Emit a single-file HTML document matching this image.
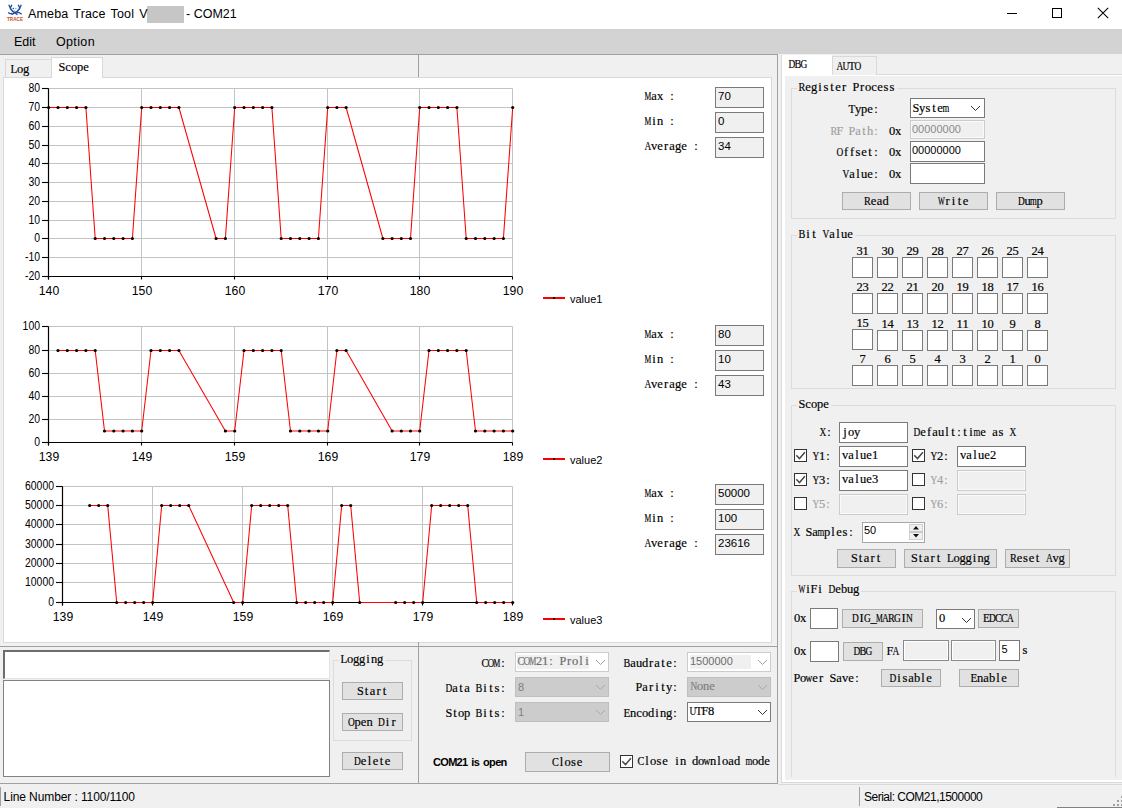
<!DOCTYPE html>
<html><head><meta charset="utf-8"><style>
html,body{margin:0;padding:0;}
body{width:1122px;height:808px;position:relative;overflow:hidden;background:#f0f0f0;}
div{position:absolute;}
svg{position:absolute;left:0;top:0;}
.sim{font-family:"Liberation Serif",serif;font-size:12.5px;stroke:currentColor;stroke-width:0.18px;}
.sans{font-family:"Liberation Sans",sans-serif;}
</style></head><body>
<div style="left:0px;top:0px;width:1122px;height:29px;background:#fff;"></div>
<div style="left:147px;top:6px;width:37px;height:17px;background:#c6c6c6;"></div>
<div style="left:1007px;top:13px;width:10px;height:1px;background:#000;"></div>
<div style="left:1052px;top:8px;width:10px;height:10px;box-sizing:border-box;background:transparent;border:1px solid #000;"></div>
<div style="left:0px;top:29px;width:1122px;height:25px;background:#d3d3d3;"></div>
<div style="left:0px;top:54px;width:778px;height:1px;background:#a0a0a0;"></div>
<div style="left:777px;top:54px;width:1px;height:730px;background:#a0a0a0;"></div>
<div style="left:0px;top:783px;width:778px;height:1px;background:#a0a0a0;"></div>
<div style="left:418px;top:55px;width:1px;height:22px;background:#a0a0a0;"></div>
<div style="left:5px;top:59px;width:47px;height:19px;box-sizing:border-box;background:#f0f0f0;border:1px solid #d9d9d9;border-bottom:none;"></div>
<div style="left:3px;top:77px;width:769px;height:566px;box-sizing:border-box;background:#fff;border:1px solid #d9d9d9;"></div>
<div style="left:51px;top:57px;width:52px;height:21px;box-sizing:border-box;background:#fff;border:1px solid #d9d9d9;border-bottom:none;"></div>
<div style="left:715px;top:87px;width:49px;height:21px;box-sizing:border-box;background:#f0f0f0;border:1px solid #7a7a7a;"></div>
<div style="left:715px;top:112px;width:49px;height:21px;box-sizing:border-box;background:#f0f0f0;border:1px solid #7a7a7a;"></div>
<div style="left:715px;top:137px;width:49px;height:21px;box-sizing:border-box;background:#f0f0f0;border:1px solid #7a7a7a;"></div>
<div style="left:715px;top:325px;width:49px;height:21px;box-sizing:border-box;background:#f0f0f0;border:1px solid #7a7a7a;"></div>
<div style="left:715px;top:350px;width:49px;height:21px;box-sizing:border-box;background:#f0f0f0;border:1px solid #7a7a7a;"></div>
<div style="left:715px;top:375px;width:49px;height:21px;box-sizing:border-box;background:#f0f0f0;border:1px solid #7a7a7a;"></div>
<div style="left:715px;top:484px;width:49px;height:21px;box-sizing:border-box;background:#f0f0f0;border:1px solid #7a7a7a;"></div>
<div style="left:715px;top:509px;width:49px;height:21px;box-sizing:border-box;background:#f0f0f0;border:1px solid #7a7a7a;"></div>
<div style="left:715px;top:534px;width:49px;height:21px;box-sizing:border-box;background:#f0f0f0;border:1px solid #7a7a7a;"></div>
<div style="left:543px;top:297px;width:22px;height:2px;background:#ff0000;"></div>
<div style="left:553px;top:297px;width:2px;height:2px;background:#000;"></div>
<div style="left:543px;top:458px;width:22px;height:2px;background:#ff0000;"></div>
<div style="left:553px;top:458px;width:2px;height:2px;background:#000;"></div>
<div style="left:543px;top:618px;width:22px;height:2px;background:#ff0000;"></div>
<div style="left:553px;top:618px;width:2px;height:2px;background:#000;"></div>
<div style="left:0px;top:646px;width:778px;height:1px;background:#a0a0a0;"></div>
<div style="left:3px;top:650px;width:327px;height:29px;box-sizing:border-box;background:#fff;border-top:2px solid #6d6d6d;border-left:2px solid #6d6d6d;border-right:1px solid #e3e3e3;border-bottom:1px solid #e3e3e3;"></div>
<div style="left:3px;top:680px;width:327px;height:97px;box-sizing:border-box;background:#fff;border:1px solid #828282;"></div>
<div style="left:333px;top:660px;width:79px;height:81px;box-sizing:border-box;background:transparent;border:1px solid #dcdcdc;"></div>
<div style="left:339px;top:654px;width:46px;height:12px;background:#f0f0f0;"></div>
<div style="left:342px;top:682px;width:61px;height:18px;box-sizing:border-box;background:#e1e1e1;border:1px solid #adadad;"></div>
<div style="left:342px;top:713px;width:61px;height:18px;box-sizing:border-box;background:#e1e1e1;border:1px solid #adadad;"></div>
<div style="left:342px;top:752px;width:61px;height:18px;box-sizing:border-box;background:#e1e1e1;border:1px solid #adadad;"></div>
<div style="left:418px;top:642px;width:1px;height:141px;background:#a0a0a0;"></div>
<div style="left:515px;top:652px;width:94px;height:20px;box-sizing:border-box;background:#fff;border:1px solid #cccccc;"></div>
<div style="left:517px;top:655px;width:72px;height:14px;background:#f0f0f0;"></div>
<div style="left:515px;top:677px;width:94px;height:20px;box-sizing:border-box;background:#cccccc;border:1px solid #bfbfbf;"></div>
<div style="left:515px;top:702px;width:94px;height:20px;box-sizing:border-box;background:#cccccc;border:1px solid #bfbfbf;"></div>
<div style="left:687px;top:652px;width:84px;height:20px;box-sizing:border-box;background:#fff;border:1px solid #cccccc;"></div>
<div style="left:690px;top:655px;width:61px;height:14px;background:#f0f0f0;"></div>
<div style="left:687px;top:677px;width:84px;height:20px;box-sizing:border-box;background:#cccccc;border:1px solid #bfbfbf;"></div>
<div style="left:687px;top:702px;width:84px;height:20px;box-sizing:border-box;background:#fff;border:1px solid #7a7a7a;"></div>
<div style="left:525px;top:752px;width:85px;height:20px;box-sizing:border-box;background:#e1e1e1;border:1px solid #adadad;"></div>
<div style="left:620px;top:755px;width:13px;height:13px;box-sizing:border-box;background:#fff;border:1px solid #333333;"></div>
<div style="left:781px;top:55px;width:341px;height:728px;background:#fff;"></div>
<div style="left:781px;top:55px;width:1px;height:728px;background:#d9d9d9;"></div>
<div style="left:781px;top:782px;width:341px;height:1px;background:#d9d9d9;"></div>
<div style="left:782px;top:55px;width:340px;height:19px;background:#f0f0f0;"></div>
<div style="left:832px;top:74px;width:290px;height:1px;background:#d9d9d9;"></div>
<div style="left:782px;top:55px;width:50px;height:20px;background:#fff;"></div>
<div style="left:832px;top:56px;width:45px;height:19px;box-sizing:border-box;background:#f0f0f0;border:1px solid #d9d9d9;border-bottom:none;"></div>
<div style="left:785px;top:76px;width:337px;height:704px;background:#f0f0f0;"></div>
<div style="left:791px;top:88px;width:325px;height:131px;box-sizing:border-box;background:transparent;border:1px solid #dcdcdc;"></div>
<div style="left:797px;top:82px;width:100px;height:12px;background:#f0f0f0;"></div>
<div style="left:910px;top:98px;width:75px;height:20px;box-sizing:border-box;background:#fff;border:1px solid #7a7a7a;"></div>
<div style="left:910px;top:120px;width:75px;height:19px;box-sizing:border-box;background:#f0f0f0;border:1px solid #cccccc;"></div>
<div style="left:911px;top:121px;width:73px;height:17px;box-sizing:border-box;border:1px solid #fafafa;"></div>
<div style="left:910px;top:141px;width:75px;height:21px;box-sizing:border-box;background:#fff;border:1px solid #7a7a7a;"></div>
<div style="left:910px;top:163px;width:75px;height:21px;box-sizing:border-box;background:#fff;border:1px solid #7a7a7a;"></div>
<div style="left:842px;top:192px;width:69px;height:18px;box-sizing:border-box;background:#e1e1e1;border:1px solid #adadad;"></div>
<div style="left:919px;top:192px;width:69px;height:18px;box-sizing:border-box;background:#e1e1e1;border:1px solid #adadad;"></div>
<div style="left:996px;top:192px;width:69px;height:18px;box-sizing:border-box;background:#e1e1e1;border:1px solid #adadad;"></div>
<div style="left:791px;top:235px;width:325px;height:154px;box-sizing:border-box;background:transparent;border:1px solid #dcdcdc;"></div>
<div style="left:797px;top:229px;width:58px;height:12px;background:#f0f0f0;"></div>
<div style="left:852px;top:257px;width:21px;height:21px;box-sizing:border-box;background:#fff;border:1px solid #7a7a7a;"></div>
<div style="left:877px;top:257px;width:21px;height:21px;box-sizing:border-box;background:#fff;border:1px solid #7a7a7a;"></div>
<div style="left:902px;top:257px;width:21px;height:21px;box-sizing:border-box;background:#fff;border:1px solid #7a7a7a;"></div>
<div style="left:927px;top:257px;width:21px;height:21px;box-sizing:border-box;background:#fff;border:1px solid #7a7a7a;"></div>
<div style="left:952px;top:257px;width:21px;height:21px;box-sizing:border-box;background:#fff;border:1px solid #7a7a7a;"></div>
<div style="left:977px;top:257px;width:21px;height:21px;box-sizing:border-box;background:#fff;border:1px solid #7a7a7a;"></div>
<div style="left:1002px;top:257px;width:21px;height:21px;box-sizing:border-box;background:#fff;border:1px solid #7a7a7a;"></div>
<div style="left:1027px;top:257px;width:21px;height:21px;box-sizing:border-box;background:#fff;border:1px solid #7a7a7a;"></div>
<div style="left:852px;top:293px;width:21px;height:21px;box-sizing:border-box;background:#fff;border:1px solid #7a7a7a;"></div>
<div style="left:877px;top:293px;width:21px;height:21px;box-sizing:border-box;background:#fff;border:1px solid #7a7a7a;"></div>
<div style="left:902px;top:293px;width:21px;height:21px;box-sizing:border-box;background:#fff;border:1px solid #7a7a7a;"></div>
<div style="left:927px;top:293px;width:21px;height:21px;box-sizing:border-box;background:#fff;border:1px solid #7a7a7a;"></div>
<div style="left:952px;top:293px;width:21px;height:21px;box-sizing:border-box;background:#fff;border:1px solid #7a7a7a;"></div>
<div style="left:977px;top:293px;width:21px;height:21px;box-sizing:border-box;background:#fff;border:1px solid #7a7a7a;"></div>
<div style="left:1002px;top:293px;width:21px;height:21px;box-sizing:border-box;background:#fff;border:1px solid #7a7a7a;"></div>
<div style="left:1027px;top:293px;width:21px;height:21px;box-sizing:border-box;background:#fff;border:1px solid #7a7a7a;"></div>
<div style="left:852px;top:329px;width:21px;height:21px;box-sizing:border-box;background:#fff;border:1px solid #7a7a7a;"></div>
<div style="left:877px;top:330px;width:21px;height:21px;box-sizing:border-box;background:#fff;border:1px solid #7a7a7a;"></div>
<div style="left:902px;top:330px;width:21px;height:21px;box-sizing:border-box;background:#fff;border:1px solid #7a7a7a;"></div>
<div style="left:927px;top:330px;width:21px;height:21px;box-sizing:border-box;background:#fff;border:1px solid #7a7a7a;"></div>
<div style="left:952px;top:330px;width:21px;height:21px;box-sizing:border-box;background:#fff;border:1px solid #7a7a7a;"></div>
<div style="left:977px;top:330px;width:21px;height:21px;box-sizing:border-box;background:#fff;border:1px solid #7a7a7a;"></div>
<div style="left:1002px;top:330px;width:21px;height:21px;box-sizing:border-box;background:#fff;border:1px solid #7a7a7a;"></div>
<div style="left:1027px;top:330px;width:21px;height:21px;box-sizing:border-box;background:#fff;border:1px solid #7a7a7a;"></div>
<div style="left:852px;top:365px;width:21px;height:21px;box-sizing:border-box;background:#fff;border:1px solid #7a7a7a;"></div>
<div style="left:877px;top:365px;width:21px;height:21px;box-sizing:border-box;background:#fff;border:1px solid #7a7a7a;"></div>
<div style="left:902px;top:365px;width:21px;height:21px;box-sizing:border-box;background:#fff;border:1px solid #7a7a7a;"></div>
<div style="left:927px;top:365px;width:21px;height:21px;box-sizing:border-box;background:#fff;border:1px solid #7a7a7a;"></div>
<div style="left:952px;top:365px;width:21px;height:21px;box-sizing:border-box;background:#fff;border:1px solid #7a7a7a;"></div>
<div style="left:977px;top:365px;width:21px;height:21px;box-sizing:border-box;background:#fff;border:1px solid #7a7a7a;"></div>
<div style="left:1002px;top:365px;width:21px;height:21px;box-sizing:border-box;background:#fff;border:1px solid #7a7a7a;"></div>
<div style="left:1027px;top:365px;width:21px;height:21px;box-sizing:border-box;background:#fff;border:1px solid #7a7a7a;"></div>
<div style="left:791px;top:405px;width:325px;height:171px;box-sizing:border-box;background:transparent;border:1px solid #dcdcdc;"></div>
<div style="left:797px;top:399px;width:34px;height:12px;background:#f0f0f0;"></div>
<div style="left:839px;top:422px;width:69px;height:21px;box-sizing:border-box;background:#fff;border:1px solid #7a7a7a;"></div>
<div style="left:794px;top:449px;width:13px;height:13px;box-sizing:border-box;background:#fff;border:1px solid #333333;"></div>
<div style="left:839px;top:446px;width:69px;height:21px;box-sizing:border-box;background:#fff;border:1px solid #7a7a7a;"></div>
<div style="left:912px;top:449px;width:13px;height:13px;box-sizing:border-box;background:#fff;border:1px solid #333333;"></div>
<div style="left:957px;top:446px;width:69px;height:21px;box-sizing:border-box;background:#fff;border:1px solid #7a7a7a;"></div>
<div style="left:794px;top:473px;width:13px;height:13px;box-sizing:border-box;background:#fff;border:1px solid #333333;"></div>
<div style="left:839px;top:470px;width:69px;height:21px;box-sizing:border-box;background:#fff;border:1px solid #7a7a7a;"></div>
<div style="left:912px;top:473px;width:13px;height:13px;box-sizing:border-box;background:#fff;border:1px solid #333333;"></div>
<div style="left:957px;top:470px;width:69px;height:21px;box-sizing:border-box;background:#f0f0f0;border:1px solid #cccccc;"></div>
<div style="left:958px;top:471px;width:67px;height:19px;box-sizing:border-box;border:1px solid #fafafa;"></div>
<div style="left:794px;top:497px;width:13px;height:13px;box-sizing:border-box;background:#fff;border:1px solid #333333;"></div>
<div style="left:839px;top:494px;width:69px;height:21px;box-sizing:border-box;background:#f0f0f0;border:1px solid #cccccc;"></div>
<div style="left:840px;top:495px;width:67px;height:19px;box-sizing:border-box;border:1px solid #fafafa;"></div>
<div style="left:912px;top:497px;width:13px;height:13px;box-sizing:border-box;background:#fff;border:1px solid #333333;"></div>
<div style="left:957px;top:494px;width:69px;height:21px;box-sizing:border-box;background:#f0f0f0;border:1px solid #cccccc;"></div>
<div style="left:958px;top:495px;width:67px;height:19px;box-sizing:border-box;border:1px solid #fafafa;"></div>
<div style="left:862px;top:522px;width:63px;height:21px;box-sizing:border-box;background:#fff;border:1px solid #a6a6ae;"></div>
<div style="left:909px;top:524px;width:14px;height:16px;box-sizing:border-box;background:#f0f0f0;border:1px solid #d0d0d0;"></div>
<div style="left:910px;top:531px;width:12px;height:2px;background:#c8c8c8;"></div>
<div style="left:837px;top:549px;width:59px;height:19px;box-sizing:border-box;background:#e1e1e1;border:1px solid #adadad;"></div>
<div style="left:904px;top:549px;width:93px;height:19px;box-sizing:border-box;background:#e1e1e1;border:1px solid #adadad;"></div>
<div style="left:1005px;top:549px;width:65px;height:19px;box-sizing:border-box;background:#e1e1e1;border:1px solid #adadad;"></div>
<div style="left:791px;top:591px;width:325px;height:187px;box-sizing:border-box;background:transparent;border:1px solid #dcdcdc;"></div>
<div style="left:797px;top:585px;width:64px;height:12px;background:#f0f0f0;"></div>
<div style="left:791px;top:777px;width:326px;height:2px;background:#f0f0f0;"></div>
<div style="left:810px;top:608px;width:28px;height:21px;box-sizing:border-box;background:#fff;border:1px solid #7a7a7a;"></div>
<div style="left:842px;top:609px;width:81px;height:19px;box-sizing:border-box;background:#e1e1e1;border:1px solid #adadad;"></div>
<div style="left:936px;top:609px;width:39px;height:20px;box-sizing:border-box;background:#fff;border:1px solid #7a7a7a;"></div>
<div style="left:978px;top:609px;width:41px;height:19px;box-sizing:border-box;background:#e1e1e1;border:1px solid #adadad;"></div>
<div style="left:810px;top:641px;width:29px;height:21px;box-sizing:border-box;background:#fff;border:1px solid #7a7a7a;"></div>
<div style="left:843px;top:642px;width:40px;height:19px;box-sizing:border-box;background:#e1e1e1;border:1px solid #adadad;"></div>
<div style="left:903px;top:640px;width:46px;height:21px;box-sizing:border-box;background:#f0f0f0;border:1px solid #8a8a8a;"></div>
<div style="left:904px;top:641px;width:44px;height:19px;box-sizing:border-box;border:1px solid #fff;"></div>
<div style="left:951px;top:640px;width:45px;height:21px;box-sizing:border-box;background:#f0f0f0;border:1px solid #8a8a8a;"></div>
<div style="left:952px;top:641px;width:43px;height:19px;box-sizing:border-box;border:1px solid #fff;"></div>
<div style="left:999px;top:640px;width:21px;height:21px;box-sizing:border-box;background:#fff;border:1px solid #7a7a7a;"></div>
<div style="left:881px;top:669px;width:60px;height:18px;box-sizing:border-box;background:#e1e1e1;border:1px solid #adadad;"></div>
<div style="left:959px;top:669px;width:60px;height:18px;box-sizing:border-box;background:#e1e1e1;border:1px solid #adadad;"></div>
<div style="left:778px;top:784px;width:344px;height:1px;background:#d9d9d9;"></div>
<div style="left:0px;top:787px;width:1px;height:19px;background:#a0a0a0;"></div>
<div style="left:859px;top:787px;width:1px;height:19px;background:#a0a0a0;"></div>
<div style="left:1121px;top:796px;width:2px;height:2px;background:#a0a0a0;"></div>
<div style="left:1117px;top:800px;width:2px;height:2px;background:#a0a0a0;"></div>
<div style="left:1121px;top:800px;width:2px;height:2px;background:#a0a0a0;"></div>
<div style="left:1113px;top:804px;width:2px;height:2px;background:#a0a0a0;"></div>
<div style="left:1117px;top:804px;width:2px;height:2px;background:#a0a0a0;"></div>
<div style="left:1121px;top:804px;width:2px;height:2px;background:#a0a0a0;"></div>
<div style="left:1057px;top:807px;width:65px;height:1px;background:#808080;"></div>
<svg width="1122" height="808" viewBox="0 0 1122 808">
<g>
<path d="M8.8 4.8 L10.3 8.2 L11.8 4.8 M18.3 4.8 L19.8 8.2 L21.3 4.8" stroke="#1b4ea3" stroke-width="1.3" fill="none"/>
<path d="M10.3 8.2 L12.5 11.2 L17.5 14.6 M19.8 8.2 L17.5 11.2 L11.5 14.6" stroke="#1b4ea3" stroke-width="1.5" fill="none"/>
<path d="M8.2 12.4 Q10 14.5 12 13.2 M16.5 12.6 Q19 12 21.7 14.2" stroke="#1b4ea3" stroke-width="1.3" fill="none"/>
<circle cx="13.4" cy="8.4" r="0.75" fill="#1b4ea3"/><rect x="15" y="7.9" width="1.6" height="0.9" fill="#7f9fd0"/><circle cx="14.7" cy="10.3" r="0.5" fill="#7f9fd0"/>
<text x="7" y="21.2" font-family="Liberation Sans" font-size="5.8" font-weight="bold" fill="#c8501c" textLength="16" lengthAdjust="spacingAndGlyphs">TRACE</text>
</g>
<text class="sans" x="28" y="18" font-size="12.5" fill="#000" text-anchor="start" word-spacing="1.6" letter-spacing="0.15">Ameba Trace Tool V</text>
<text class="sans" x="186" y="18" font-size="12.5" fill="#000" text-anchor="start" >- COM21</text>
<path d="M1097.8 7.8 L1108.2 18.2 M1108.2 7.8 L1097.8 18.2" stroke="#000" stroke-width="1.05"/>
<text class="sans" x="14" y="46" font-size="12.5" fill="#000" text-anchor="start" >Edit</text>
<text class="sans" x="56" y="46" font-size="12.5" fill="#000" text-anchor="start" letter-spacing="0.35">Option</text>
<text class="sim" x="16.88 22.88" y="73" fill="#000" style="color:#000">og</text>
<text class="sim" transform="translate(14.0 73) scale(0.891 1)" x="-3.82" y="0" fill="#000" style="color:#000">L</text>
<text class="sim" x="65.23 70.88 76.88 83.23" y="71" fill="#000" style="color:#000">cope</text>
<text class="sim" transform="translate(62.0 71) scale(0.978 1)" x="-3.48" y="0" fill="#000" style="color:#000">S</text>
<line x1="48.5" y1="276.5" x2="512.5" y2="276.5" stroke="#c3c3c3"/>
<line x1="48.5" y1="257.5" x2="512.5" y2="257.5" stroke="#c3c3c3"/>
<line x1="48.5" y1="238.5" x2="512.5" y2="238.5" stroke="#c3c3c3"/>
<line x1="48.5" y1="220.5" x2="512.5" y2="220.5" stroke="#c3c3c3"/>
<line x1="48.5" y1="201.5" x2="512.5" y2="201.5" stroke="#c3c3c3"/>
<line x1="48.5" y1="182.5" x2="512.5" y2="182.5" stroke="#c3c3c3"/>
<line x1="48.5" y1="163.5" x2="512.5" y2="163.5" stroke="#c3c3c3"/>
<line x1="48.5" y1="145.5" x2="512.5" y2="145.5" stroke="#c3c3c3"/>
<line x1="48.5" y1="126.5" x2="512.5" y2="126.5" stroke="#c3c3c3"/>
<line x1="48.5" y1="107.5" x2="512.5" y2="107.5" stroke="#c3c3c3"/>
<line x1="48.5" y1="88.5" x2="512.5" y2="88.5" stroke="#c3c3c3"/>
<line x1="48.5" y1="88.5" x2="48.5" y2="276.5" stroke="#c3c3c3"/>
<line x1="141.5" y1="88.5" x2="141.5" y2="276.5" stroke="#c3c3c3"/>
<line x1="234.5" y1="88.5" x2="234.5" y2="276.5" stroke="#c3c3c3"/>
<line x1="327.5" y1="88.5" x2="327.5" y2="276.5" stroke="#c3c3c3"/>
<line x1="419.5" y1="88.5" x2="419.5" y2="276.5" stroke="#c3c3c3"/>
<line x1="512.5" y1="88.5" x2="512.5" y2="276.5" stroke="#c3c3c3"/>
<line x1="48.5" y1="88.5" x2="48.5" y2="279.5" stroke="#000" stroke-width="1.2"/>
<line x1="42.0" y1="276.5" x2="512.5" y2="276.5" stroke="#000" stroke-width="1.2"/>
<line x1="42.0" y1="276.5" x2="48.5" y2="276.5" stroke="#000" stroke-width="1.1"/>
<text class="sans" transform="translate(40.0 280.4) scale(0.95 1.12)" x="0" y="0" text-anchor="end" font-size="11" fill="#000">-20</text>
<line x1="42.0" y1="257.5" x2="48.5" y2="257.5" stroke="#000" stroke-width="1.1"/>
<text class="sans" transform="translate(40.0 261.4) scale(0.95 1.12)" x="0" y="0" text-anchor="end" font-size="11" fill="#000">-10</text>
<line x1="42.0" y1="238.5" x2="48.5" y2="238.5" stroke="#000" stroke-width="1.1"/>
<text class="sans" transform="translate(40.0 242.4) scale(0.95 1.12)" x="0" y="0" text-anchor="end" font-size="11" fill="#000">0</text>
<line x1="42.0" y1="220.5" x2="48.5" y2="220.5" stroke="#000" stroke-width="1.1"/>
<text class="sans" transform="translate(40.0 224.4) scale(0.95 1.12)" x="0" y="0" text-anchor="end" font-size="11" fill="#000">10</text>
<line x1="42.0" y1="201.5" x2="48.5" y2="201.5" stroke="#000" stroke-width="1.1"/>
<text class="sans" transform="translate(40.0 205.4) scale(0.95 1.12)" x="0" y="0" text-anchor="end" font-size="11" fill="#000">20</text>
<line x1="42.0" y1="182.5" x2="48.5" y2="182.5" stroke="#000" stroke-width="1.1"/>
<text class="sans" transform="translate(40.0 186.4) scale(0.95 1.12)" x="0" y="0" text-anchor="end" font-size="11" fill="#000">30</text>
<line x1="42.0" y1="163.5" x2="48.5" y2="163.5" stroke="#000" stroke-width="1.1"/>
<text class="sans" transform="translate(40.0 167.4) scale(0.95 1.12)" x="0" y="0" text-anchor="end" font-size="11" fill="#000">40</text>
<line x1="42.0" y1="145.5" x2="48.5" y2="145.5" stroke="#000" stroke-width="1.1"/>
<text class="sans" transform="translate(40.0 149.4) scale(0.95 1.12)" x="0" y="0" text-anchor="end" font-size="11" fill="#000">50</text>
<line x1="42.0" y1="126.5" x2="48.5" y2="126.5" stroke="#000" stroke-width="1.1"/>
<text class="sans" transform="translate(40.0 130.4) scale(0.95 1.12)" x="0" y="0" text-anchor="end" font-size="11" fill="#000">60</text>
<line x1="42.0" y1="107.5" x2="48.5" y2="107.5" stroke="#000" stroke-width="1.1"/>
<text class="sans" transform="translate(40.0 111.4) scale(0.95 1.12)" x="0" y="0" text-anchor="end" font-size="11" fill="#000">70</text>
<line x1="42.0" y1="88.5" x2="48.5" y2="88.5" stroke="#000" stroke-width="1.1"/>
<text class="sans" transform="translate(40.0 92.4) scale(0.95 1.12)" x="0" y="0" text-anchor="end" font-size="11" fill="#000">80</text>
<line x1="48.5" y1="276.5" x2="48.5" y2="279.5" stroke="#000" stroke-width="1.1"/>
<text class="sans" transform="translate(49.0 295.0) scale(0.98 1.07)" x="0" y="0" text-anchor="middle" font-size="12.5" fill="#000">140</text>
<line x1="141.5" y1="276.5" x2="141.5" y2="279.5" stroke="#000" stroke-width="1.1"/>
<text class="sans" transform="translate(142.0 295.0) scale(0.98 1.07)" x="0" y="0" text-anchor="middle" font-size="12.5" fill="#000">150</text>
<line x1="234.5" y1="276.5" x2="234.5" y2="279.5" stroke="#000" stroke-width="1.1"/>
<text class="sans" transform="translate(235.0 295.0) scale(0.98 1.07)" x="0" y="0" text-anchor="middle" font-size="12.5" fill="#000">160</text>
<line x1="327.5" y1="276.5" x2="327.5" y2="279.5" stroke="#000" stroke-width="1.1"/>
<text class="sans" transform="translate(328.0 295.0) scale(0.98 1.07)" x="0" y="0" text-anchor="middle" font-size="12.5" fill="#000">170</text>
<line x1="419.5" y1="276.5" x2="419.5" y2="279.5" stroke="#000" stroke-width="1.1"/>
<text class="sans" transform="translate(420.0 295.0) scale(0.98 1.07)" x="0" y="0" text-anchor="middle" font-size="12.5" fill="#000">180</text>
<line x1="512.5" y1="276.5" x2="512.5" y2="279.5" stroke="#000" stroke-width="1.1"/>
<text class="sans" transform="translate(513.0 295.0) scale(0.98 1.07)" x="0" y="0" text-anchor="middle" font-size="12.5" fill="#000">190</text>
<polyline points="48.70,107.50 58.00,107.50 67.30,107.50 76.60,107.50 85.90,107.50 95.20,238.50 104.50,238.50 113.80,238.50 123.10,238.50 132.40,238.50 141.70,107.50 151.00,107.50 160.30,107.50 169.60,107.50 178.90,107.50 216.10,238.50 225.40,238.50 234.70,107.50 244.00,107.50 253.30,107.50 262.60,107.50 271.90,107.50 281.20,238.50 290.50,238.50 299.80,238.50 309.10,238.50 318.40,238.50 327.70,107.50 336.90,107.50 346.10,107.50 382.90,238.50 392.10,238.50 401.30,238.50 410.50,238.50 419.70,107.50 429.00,107.50 438.30,107.50 447.60,107.50 456.90,107.50 466.20,238.50 475.50,238.50 484.80,238.50 494.10,238.50 503.40,238.50 512.70,107.50" fill="none" stroke="#ff0000" stroke-width="1.05" stroke-linejoin="round"/>
<circle cx="48.70" cy="107.50" r="1.6" fill="#000"/>
<circle cx="58.00" cy="107.50" r="1.6" fill="#000"/>
<circle cx="67.30" cy="107.50" r="1.6" fill="#000"/>
<circle cx="76.60" cy="107.50" r="1.6" fill="#000"/>
<circle cx="85.90" cy="107.50" r="1.6" fill="#000"/>
<circle cx="95.20" cy="238.50" r="1.6" fill="#000"/>
<circle cx="104.50" cy="238.50" r="1.6" fill="#000"/>
<circle cx="113.80" cy="238.50" r="1.6" fill="#000"/>
<circle cx="123.10" cy="238.50" r="1.6" fill="#000"/>
<circle cx="132.40" cy="238.50" r="1.6" fill="#000"/>
<circle cx="141.70" cy="107.50" r="1.6" fill="#000"/>
<circle cx="151.00" cy="107.50" r="1.6" fill="#000"/>
<circle cx="160.30" cy="107.50" r="1.6" fill="#000"/>
<circle cx="169.60" cy="107.50" r="1.6" fill="#000"/>
<circle cx="178.90" cy="107.50" r="1.6" fill="#000"/>
<circle cx="216.10" cy="238.50" r="1.6" fill="#000"/>
<circle cx="225.40" cy="238.50" r="1.6" fill="#000"/>
<circle cx="234.70" cy="107.50" r="1.6" fill="#000"/>
<circle cx="244.00" cy="107.50" r="1.6" fill="#000"/>
<circle cx="253.30" cy="107.50" r="1.6" fill="#000"/>
<circle cx="262.60" cy="107.50" r="1.6" fill="#000"/>
<circle cx="271.90" cy="107.50" r="1.6" fill="#000"/>
<circle cx="281.20" cy="238.50" r="1.6" fill="#000"/>
<circle cx="290.50" cy="238.50" r="1.6" fill="#000"/>
<circle cx="299.80" cy="238.50" r="1.6" fill="#000"/>
<circle cx="309.10" cy="238.50" r="1.6" fill="#000"/>
<circle cx="318.40" cy="238.50" r="1.6" fill="#000"/>
<circle cx="327.70" cy="107.50" r="1.6" fill="#000"/>
<circle cx="336.90" cy="107.50" r="1.6" fill="#000"/>
<circle cx="346.10" cy="107.50" r="1.6" fill="#000"/>
<circle cx="382.90" cy="238.50" r="1.6" fill="#000"/>
<circle cx="392.10" cy="238.50" r="1.6" fill="#000"/>
<circle cx="401.30" cy="238.50" r="1.6" fill="#000"/>
<circle cx="410.50" cy="238.50" r="1.6" fill="#000"/>
<circle cx="419.70" cy="107.50" r="1.6" fill="#000"/>
<circle cx="429.00" cy="107.50" r="1.6" fill="#000"/>
<circle cx="438.30" cy="107.50" r="1.6" fill="#000"/>
<circle cx="447.60" cy="107.50" r="1.6" fill="#000"/>
<circle cx="456.90" cy="107.50" r="1.6" fill="#000"/>
<circle cx="466.20" cy="238.50" r="1.6" fill="#000"/>
<circle cx="475.50" cy="238.50" r="1.6" fill="#000"/>
<circle cx="484.80" cy="238.50" r="1.6" fill="#000"/>
<circle cx="494.10" cy="238.50" r="1.6" fill="#000"/>
<circle cx="503.40" cy="238.50" r="1.6" fill="#000"/>
<circle cx="512.70" cy="107.50" r="1.6" fill="#000"/>
<line x1="48.5" y1="442.5" x2="512.5" y2="442.5" stroke="#c3c3c3"/>
<line x1="48.5" y1="419.5" x2="512.5" y2="419.5" stroke="#c3c3c3"/>
<line x1="48.5" y1="396.5" x2="512.5" y2="396.5" stroke="#c3c3c3"/>
<line x1="48.5" y1="373.5" x2="512.5" y2="373.5" stroke="#c3c3c3"/>
<line x1="48.5" y1="350.5" x2="512.5" y2="350.5" stroke="#c3c3c3"/>
<line x1="48.5" y1="326.5" x2="512.5" y2="326.5" stroke="#c3c3c3"/>
<line x1="48.5" y1="326.5" x2="48.5" y2="442.5" stroke="#c3c3c3"/>
<line x1="141.5" y1="326.5" x2="141.5" y2="442.5" stroke="#c3c3c3"/>
<line x1="234.5" y1="326.5" x2="234.5" y2="442.5" stroke="#c3c3c3"/>
<line x1="327.5" y1="326.5" x2="327.5" y2="442.5" stroke="#c3c3c3"/>
<line x1="419.5" y1="326.5" x2="419.5" y2="442.5" stroke="#c3c3c3"/>
<line x1="512.5" y1="326.5" x2="512.5" y2="442.5" stroke="#c3c3c3"/>
<line x1="48.5" y1="326.5" x2="48.5" y2="445.5" stroke="#000" stroke-width="1.2"/>
<line x1="42.0" y1="442.5" x2="512.5" y2="442.5" stroke="#000" stroke-width="1.2"/>
<line x1="42.0" y1="442.5" x2="48.5" y2="442.5" stroke="#000" stroke-width="1.1"/>
<text class="sans" transform="translate(40.0 446.4) scale(0.95 1.12)" x="0" y="0" text-anchor="end" font-size="11" fill="#000">0</text>
<line x1="42.0" y1="419.5" x2="48.5" y2="419.5" stroke="#000" stroke-width="1.1"/>
<text class="sans" transform="translate(40.0 423.4) scale(0.95 1.12)" x="0" y="0" text-anchor="end" font-size="11" fill="#000">20</text>
<line x1="42.0" y1="396.5" x2="48.5" y2="396.5" stroke="#000" stroke-width="1.1"/>
<text class="sans" transform="translate(40.0 400.4) scale(0.95 1.12)" x="0" y="0" text-anchor="end" font-size="11" fill="#000">40</text>
<line x1="42.0" y1="373.5" x2="48.5" y2="373.5" stroke="#000" stroke-width="1.1"/>
<text class="sans" transform="translate(40.0 377.4) scale(0.95 1.12)" x="0" y="0" text-anchor="end" font-size="11" fill="#000">60</text>
<line x1="42.0" y1="350.5" x2="48.5" y2="350.5" stroke="#000" stroke-width="1.1"/>
<text class="sans" transform="translate(40.0 354.4) scale(0.95 1.12)" x="0" y="0" text-anchor="end" font-size="11" fill="#000">80</text>
<line x1="42.0" y1="326.5" x2="48.5" y2="326.5" stroke="#000" stroke-width="1.1"/>
<text class="sans" transform="translate(40.0 330.4) scale(0.95 1.12)" x="0" y="0" text-anchor="end" font-size="11" fill="#000">100</text>
<line x1="48.5" y1="442.5" x2="48.5" y2="445.5" stroke="#000" stroke-width="1.1"/>
<text class="sans" transform="translate(49.0 461.0) scale(0.98 1.07)" x="0" y="0" text-anchor="middle" font-size="12.5" fill="#000">139</text>
<line x1="141.5" y1="442.5" x2="141.5" y2="445.5" stroke="#000" stroke-width="1.1"/>
<text class="sans" transform="translate(142.0 461.0) scale(0.98 1.07)" x="0" y="0" text-anchor="middle" font-size="12.5" fill="#000">149</text>
<line x1="234.5" y1="442.5" x2="234.5" y2="445.5" stroke="#000" stroke-width="1.1"/>
<text class="sans" transform="translate(235.0 461.0) scale(0.98 1.07)" x="0" y="0" text-anchor="middle" font-size="12.5" fill="#000">159</text>
<line x1="327.5" y1="442.5" x2="327.5" y2="445.5" stroke="#000" stroke-width="1.1"/>
<text class="sans" transform="translate(328.0 461.0) scale(0.98 1.07)" x="0" y="0" text-anchor="middle" font-size="12.5" fill="#000">169</text>
<line x1="419.5" y1="442.5" x2="419.5" y2="445.5" stroke="#000" stroke-width="1.1"/>
<text class="sans" transform="translate(420.0 461.0) scale(0.98 1.07)" x="0" y="0" text-anchor="middle" font-size="12.5" fill="#000">179</text>
<line x1="512.5" y1="442.5" x2="512.5" y2="445.5" stroke="#000" stroke-width="1.1"/>
<text class="sans" transform="translate(513.0 461.0) scale(0.98 1.07)" x="0" y="0" text-anchor="middle" font-size="12.5" fill="#000">189</text>
<polyline points="58.00,350.50 67.30,350.50 76.60,350.50 85.90,350.50 95.20,350.50 104.50,431.00 113.80,431.00 123.10,431.00 132.40,431.00 141.70,431.00 151.00,350.50 160.30,350.50 169.60,350.50 178.90,350.50 225.40,431.00 234.70,431.00 244.00,350.50 253.30,350.50 262.60,350.50 271.90,350.50 281.20,350.50 290.50,431.00 299.80,431.00 309.10,431.00 318.40,431.00 327.70,431.00 336.90,350.50 346.10,350.50 392.10,431.00 401.30,431.00 410.50,431.00 419.70,431.00 429.00,350.50 438.30,350.50 447.60,350.50 456.90,350.50 466.20,350.50 475.50,431.00 484.80,431.00 494.10,431.00 503.40,431.00 512.70,431.00" fill="none" stroke="#ff0000" stroke-width="1.05" stroke-linejoin="round"/>
<circle cx="58.00" cy="350.50" r="1.6" fill="#000"/>
<circle cx="67.30" cy="350.50" r="1.6" fill="#000"/>
<circle cx="76.60" cy="350.50" r="1.6" fill="#000"/>
<circle cx="85.90" cy="350.50" r="1.6" fill="#000"/>
<circle cx="95.20" cy="350.50" r="1.6" fill="#000"/>
<circle cx="104.50" cy="431.00" r="1.6" fill="#000"/>
<circle cx="113.80" cy="431.00" r="1.6" fill="#000"/>
<circle cx="123.10" cy="431.00" r="1.6" fill="#000"/>
<circle cx="132.40" cy="431.00" r="1.6" fill="#000"/>
<circle cx="141.70" cy="431.00" r="1.6" fill="#000"/>
<circle cx="151.00" cy="350.50" r="1.6" fill="#000"/>
<circle cx="160.30" cy="350.50" r="1.6" fill="#000"/>
<circle cx="169.60" cy="350.50" r="1.6" fill="#000"/>
<circle cx="178.90" cy="350.50" r="1.6" fill="#000"/>
<circle cx="225.40" cy="431.00" r="1.6" fill="#000"/>
<circle cx="234.70" cy="431.00" r="1.6" fill="#000"/>
<circle cx="244.00" cy="350.50" r="1.6" fill="#000"/>
<circle cx="253.30" cy="350.50" r="1.6" fill="#000"/>
<circle cx="262.60" cy="350.50" r="1.6" fill="#000"/>
<circle cx="271.90" cy="350.50" r="1.6" fill="#000"/>
<circle cx="281.20" cy="350.50" r="1.6" fill="#000"/>
<circle cx="290.50" cy="431.00" r="1.6" fill="#000"/>
<circle cx="299.80" cy="431.00" r="1.6" fill="#000"/>
<circle cx="309.10" cy="431.00" r="1.6" fill="#000"/>
<circle cx="318.40" cy="431.00" r="1.6" fill="#000"/>
<circle cx="327.70" cy="431.00" r="1.6" fill="#000"/>
<circle cx="336.90" cy="350.50" r="1.6" fill="#000"/>
<circle cx="346.10" cy="350.50" r="1.6" fill="#000"/>
<circle cx="392.10" cy="431.00" r="1.6" fill="#000"/>
<circle cx="401.30" cy="431.00" r="1.6" fill="#000"/>
<circle cx="410.50" cy="431.00" r="1.6" fill="#000"/>
<circle cx="419.70" cy="431.00" r="1.6" fill="#000"/>
<circle cx="429.00" cy="350.50" r="1.6" fill="#000"/>
<circle cx="438.30" cy="350.50" r="1.6" fill="#000"/>
<circle cx="447.60" cy="350.50" r="1.6" fill="#000"/>
<circle cx="456.90" cy="350.50" r="1.6" fill="#000"/>
<circle cx="466.20" cy="350.50" r="1.6" fill="#000"/>
<circle cx="475.50" cy="431.00" r="1.6" fill="#000"/>
<circle cx="484.80" cy="431.00" r="1.6" fill="#000"/>
<circle cx="494.10" cy="431.00" r="1.6" fill="#000"/>
<circle cx="503.40" cy="431.00" r="1.6" fill="#000"/>
<circle cx="512.70" cy="431.00" r="1.6" fill="#000"/>
<line x1="62.5" y1="602.5" x2="512.5" y2="602.5" stroke="#c3c3c3"/>
<line x1="62.5" y1="582.5" x2="512.5" y2="582.5" stroke="#c3c3c3"/>
<line x1="62.5" y1="563.5" x2="512.5" y2="563.5" stroke="#c3c3c3"/>
<line x1="62.5" y1="544.5" x2="512.5" y2="544.5" stroke="#c3c3c3"/>
<line x1="62.5" y1="524.5" x2="512.5" y2="524.5" stroke="#c3c3c3"/>
<line x1="62.5" y1="505.5" x2="512.5" y2="505.5" stroke="#c3c3c3"/>
<line x1="62.5" y1="486.5" x2="512.5" y2="486.5" stroke="#c3c3c3"/>
<line x1="62.5" y1="486.5" x2="62.5" y2="602.5" stroke="#c3c3c3"/>
<line x1="152.5" y1="486.5" x2="152.5" y2="602.5" stroke="#c3c3c3"/>
<line x1="242.5" y1="486.5" x2="242.5" y2="602.5" stroke="#c3c3c3"/>
<line x1="332.5" y1="486.5" x2="332.5" y2="602.5" stroke="#c3c3c3"/>
<line x1="422.5" y1="486.5" x2="422.5" y2="602.5" stroke="#c3c3c3"/>
<line x1="512.5" y1="486.5" x2="512.5" y2="602.5" stroke="#c3c3c3"/>
<line x1="62.5" y1="486.5" x2="62.5" y2="605.5" stroke="#000" stroke-width="1.2"/>
<line x1="56.0" y1="602.5" x2="512.5" y2="602.5" stroke="#000" stroke-width="1.2"/>
<line x1="56.0" y1="602.5" x2="62.5" y2="602.5" stroke="#000" stroke-width="1.1"/>
<text class="sans" transform="translate(54.0 606.4) scale(0.95 1.12)" x="0" y="0" text-anchor="end" font-size="11" fill="#000">0</text>
<line x1="56.0" y1="582.5" x2="62.5" y2="582.5" stroke="#000" stroke-width="1.1"/>
<text class="sans" transform="translate(54.0 586.4) scale(0.95 1.12)" x="0" y="0" text-anchor="end" font-size="11" fill="#000">10000</text>
<line x1="56.0" y1="563.5" x2="62.5" y2="563.5" stroke="#000" stroke-width="1.1"/>
<text class="sans" transform="translate(54.0 567.4) scale(0.95 1.12)" x="0" y="0" text-anchor="end" font-size="11" fill="#000">20000</text>
<line x1="56.0" y1="544.5" x2="62.5" y2="544.5" stroke="#000" stroke-width="1.1"/>
<text class="sans" transform="translate(54.0 548.4) scale(0.95 1.12)" x="0" y="0" text-anchor="end" font-size="11" fill="#000">30000</text>
<line x1="56.0" y1="524.5" x2="62.5" y2="524.5" stroke="#000" stroke-width="1.1"/>
<text class="sans" transform="translate(54.0 528.4) scale(0.95 1.12)" x="0" y="0" text-anchor="end" font-size="11" fill="#000">40000</text>
<line x1="56.0" y1="505.5" x2="62.5" y2="505.5" stroke="#000" stroke-width="1.1"/>
<text class="sans" transform="translate(54.0 509.4) scale(0.95 1.12)" x="0" y="0" text-anchor="end" font-size="11" fill="#000">50000</text>
<line x1="56.0" y1="486.5" x2="62.5" y2="486.5" stroke="#000" stroke-width="1.1"/>
<text class="sans" transform="translate(54.0 490.4) scale(0.95 1.12)" x="0" y="0" text-anchor="end" font-size="11" fill="#000">60000</text>
<line x1="62.5" y1="602.5" x2="62.5" y2="605.5" stroke="#000" stroke-width="1.1"/>
<text class="sans" transform="translate(63.0 621.0) scale(0.98 1.07)" x="0" y="0" text-anchor="middle" font-size="12.5" fill="#000">139</text>
<line x1="152.5" y1="602.5" x2="152.5" y2="605.5" stroke="#000" stroke-width="1.1"/>
<text class="sans" transform="translate(153.0 621.0) scale(0.98 1.07)" x="0" y="0" text-anchor="middle" font-size="12.5" fill="#000">149</text>
<line x1="242.5" y1="602.5" x2="242.5" y2="605.5" stroke="#000" stroke-width="1.1"/>
<text class="sans" transform="translate(243.0 621.0) scale(0.98 1.07)" x="0" y="0" text-anchor="middle" font-size="12.5" fill="#000">159</text>
<line x1="332.5" y1="602.5" x2="332.5" y2="605.5" stroke="#000" stroke-width="1.1"/>
<text class="sans" transform="translate(333.0 621.0) scale(0.98 1.07)" x="0" y="0" text-anchor="middle" font-size="12.5" fill="#000">169</text>
<line x1="422.5" y1="602.5" x2="422.5" y2="605.5" stroke="#000" stroke-width="1.1"/>
<text class="sans" transform="translate(423.0 621.0) scale(0.98 1.07)" x="0" y="0" text-anchor="middle" font-size="12.5" fill="#000">179</text>
<line x1="512.5" y1="602.5" x2="512.5" y2="605.5" stroke="#000" stroke-width="1.1"/>
<text class="sans" transform="translate(513.0 621.0) scale(0.98 1.07)" x="0" y="0" text-anchor="middle" font-size="12.5" fill="#000">189</text>
<polyline points="89.70,505.50 98.70,505.50 107.70,505.50 116.70,602.50 125.70,602.50 134.70,602.50 143.70,602.50 152.70,602.50 161.70,505.50 170.70,505.50 179.70,505.50 188.70,505.50 233.70,602.50 242.70,602.50 251.70,505.50 260.70,505.50 269.70,505.50 278.70,505.50 287.70,505.50 296.70,602.50 305.70,602.50 314.70,602.50 323.70,602.50 332.70,602.50 341.70,505.50 350.70,505.50 359.70,602.50 395.70,602.50 404.70,602.50 413.70,602.50 422.70,602.50 431.70,505.50 440.70,505.50 449.70,505.50 458.70,505.50 467.70,505.50 476.70,602.50 485.70,602.50 494.70,602.50 503.70,602.50 512.70,602.50" fill="none" stroke="#ff0000" stroke-width="1.05" stroke-linejoin="round"/>
<circle cx="89.70" cy="505.50" r="1.6" fill="#000"/>
<circle cx="98.70" cy="505.50" r="1.6" fill="#000"/>
<circle cx="107.70" cy="505.50" r="1.6" fill="#000"/>
<circle cx="116.70" cy="602.50" r="1.6" fill="#000"/>
<circle cx="125.70" cy="602.50" r="1.6" fill="#000"/>
<circle cx="134.70" cy="602.50" r="1.6" fill="#000"/>
<circle cx="143.70" cy="602.50" r="1.6" fill="#000"/>
<circle cx="152.70" cy="602.50" r="1.6" fill="#000"/>
<circle cx="161.70" cy="505.50" r="1.6" fill="#000"/>
<circle cx="170.70" cy="505.50" r="1.6" fill="#000"/>
<circle cx="179.70" cy="505.50" r="1.6" fill="#000"/>
<circle cx="188.70" cy="505.50" r="1.6" fill="#000"/>
<circle cx="233.70" cy="602.50" r="1.6" fill="#000"/>
<circle cx="242.70" cy="602.50" r="1.6" fill="#000"/>
<circle cx="251.70" cy="505.50" r="1.6" fill="#000"/>
<circle cx="260.70" cy="505.50" r="1.6" fill="#000"/>
<circle cx="269.70" cy="505.50" r="1.6" fill="#000"/>
<circle cx="278.70" cy="505.50" r="1.6" fill="#000"/>
<circle cx="287.70" cy="505.50" r="1.6" fill="#000"/>
<circle cx="296.70" cy="602.50" r="1.6" fill="#000"/>
<circle cx="305.70" cy="602.50" r="1.6" fill="#000"/>
<circle cx="314.70" cy="602.50" r="1.6" fill="#000"/>
<circle cx="323.70" cy="602.50" r="1.6" fill="#000"/>
<circle cx="332.70" cy="602.50" r="1.6" fill="#000"/>
<circle cx="341.70" cy="505.50" r="1.6" fill="#000"/>
<circle cx="350.70" cy="505.50" r="1.6" fill="#000"/>
<circle cx="359.70" cy="602.50" r="1.6" fill="#000"/>
<circle cx="395.70" cy="602.50" r="1.6" fill="#000"/>
<circle cx="404.70" cy="602.50" r="1.6" fill="#000"/>
<circle cx="413.70" cy="602.50" r="1.6" fill="#000"/>
<circle cx="422.70" cy="602.50" r="1.6" fill="#000"/>
<circle cx="431.70" cy="505.50" r="1.6" fill="#000"/>
<circle cx="440.70" cy="505.50" r="1.6" fill="#000"/>
<circle cx="449.70" cy="505.50" r="1.6" fill="#000"/>
<circle cx="458.70" cy="505.50" r="1.6" fill="#000"/>
<circle cx="467.70" cy="505.50" r="1.6" fill="#000"/>
<circle cx="476.70" cy="602.50" r="1.6" fill="#000"/>
<circle cx="485.70" cy="602.50" r="1.6" fill="#000"/>
<circle cx="494.70" cy="602.50" r="1.6" fill="#000"/>
<circle cx="503.70" cy="602.50" r="1.6" fill="#000"/>
<circle cx="512.70" cy="602.50" r="1.6" fill="#000"/>
<text class="sim" x="651.23 656.88 670.26" y="100" fill="#000" style="color:#000">ax:</text>
<text class="sim" transform="translate(648.0 100) scale(0.612 1)" x="-5.56" y="0" fill="#000" style="color:#000">M</text>
<text class="sans" x="718" y="100" font-size="11.5" fill="#000" text-anchor="start" >70</text>
<text class="sim" x="652.26 656.88 670.26" y="125" fill="#000" style="color:#000">in:</text>
<text class="sim" transform="translate(648.0 125) scale(0.612 1)" x="-5.56" y="0" fill="#000" style="color:#000">M</text>
<text class="sans" x="718" y="125" font-size="11.5" fill="#000" text-anchor="start" >0</text>
<text class="sim" x="650.88 657.23 663.92 669.23 674.88 681.23 694.26" y="150" fill="#000" style="color:#000">verage:</text>
<text class="sim" transform="translate(648.0 150) scale(0.753 1)" x="-4.51" y="0" fill="#000" style="color:#000">A</text>
<text class="sans" x="718" y="150" font-size="11.5" fill="#000" text-anchor="start" >34</text>
<text class="sim" x="651.23 656.88 670.26" y="338" fill="#000" style="color:#000">ax:</text>
<text class="sim" transform="translate(648.0 338) scale(0.612 1)" x="-5.56" y="0" fill="#000" style="color:#000">M</text>
<text class="sans" x="718" y="338" font-size="11.5" fill="#000" text-anchor="start" >80</text>
<text class="sim" x="652.26 656.88 670.26" y="363" fill="#000" style="color:#000">in:</text>
<text class="sim" transform="translate(648.0 363) scale(0.612 1)" x="-5.56" y="0" fill="#000" style="color:#000">M</text>
<text class="sans" x="718" y="363" font-size="11.5" fill="#000" text-anchor="start" >10</text>
<text class="sim" x="650.88 657.23 663.92 669.23 674.88 681.23 694.26" y="388" fill="#000" style="color:#000">verage:</text>
<text class="sim" transform="translate(648.0 388) scale(0.753 1)" x="-4.51" y="0" fill="#000" style="color:#000">A</text>
<text class="sans" x="718" y="388" font-size="11.5" fill="#000" text-anchor="start" >43</text>
<text class="sim" x="651.23 656.88 670.26" y="497" fill="#000" style="color:#000">ax:</text>
<text class="sim" transform="translate(648.0 497) scale(0.612 1)" x="-5.56" y="0" fill="#000" style="color:#000">M</text>
<text class="sans" x="718" y="497" font-size="11.5" fill="#000" text-anchor="start" >50000</text>
<text class="sim" x="652.26 656.88 670.26" y="522" fill="#000" style="color:#000">in:</text>
<text class="sim" transform="translate(648.0 522) scale(0.612 1)" x="-5.56" y="0" fill="#000" style="color:#000">M</text>
<text class="sans" x="718" y="522" font-size="11.5" fill="#000" text-anchor="start" >100</text>
<text class="sim" x="650.88 657.23 663.92 669.23 674.88 681.23 694.26" y="547" fill="#000" style="color:#000">verage:</text>
<text class="sim" transform="translate(648.0 547) scale(0.753 1)" x="-4.51" y="0" fill="#000" style="color:#000">A</text>
<text class="sans" x="718" y="547" font-size="11.5" fill="#000" text-anchor="start" >23616</text>
<text class="sans" x="570" y="303" font-size="11" fill="#000" text-anchor="start" >value1</text>
<text class="sans" x="570" y="464" font-size="11" fill="#000" text-anchor="start" >value2</text>
<text class="sans" x="570" y="624" font-size="11" fill="#000" text-anchor="start" >value3</text>
<text class="sim" x="346.88 352.88 358.88 366.26 370.88 376.88" y="663" fill="#000" style="color:#000">ogging</text>
<text class="sim" transform="translate(344.0 663) scale(0.891 1)" x="-3.82" y="0" fill="#000" style="color:#000">L</text>
<text class="sim" x="364.76 369.73 376.42 382.76" y="695" fill="#000" style="color:#000">tart</text>
<text class="sim" transform="translate(360.5 695) scale(0.978 1)" x="-3.48" y="0" fill="#000" style="color:#000">S</text>
<text class="sim" x="354.38 360.73 366.38 385.76 391.42" y="726" fill="#000" style="color:#000">penir</text>
<text class="sim" transform="translate(351.5 726) scale(0.753 1)" x="-4.51" y="0" fill="#000" style="color:#000">O</text>
<text class="sim" transform="translate(381.5 726) scale(0.753 1)" x="-4.51" y="0" fill="#000" style="color:#000">D</text>
<text class="sim" x="360.73 367.76 372.73 379.76 384.73" y="765" fill="#000" style="color:#000">elete</text>
<text class="sim" transform="translate(357.5 765) scale(0.753 1)" x="-4.51" y="0" fill="#000" style="color:#000">D</text>
<text class="sim" x="501.26" y="667" fill="#000" style="color:#000">:</text>
<text class="sim" transform="translate(485.0 667) scale(0.816 1)" x="-4.17" y="0" fill="#000" style="color:#000">C</text>
<text class="sim" transform="translate(491.0 667) scale(0.753 1)" x="-4.51" y="0" fill="#000" style="color:#000">O</text>
<text class="sim" transform="translate(497.0 667) scale(0.612 1)" x="-5.56" y="0" fill="#000" style="color:#000">M</text>
<text class="sim" x="452.23 459.26 464.23 483.26 489.26 494.57 501.26" y="692" fill="#000" style="color:#000">ataits:</text>
<text class="sim" transform="translate(449.0 692) scale(0.753 1)" x="-4.51" y="0" fill="#000" style="color:#000">D</text>
<text class="sim" transform="translate(479.0 692) scale(0.816 1)" x="-4.17" y="0" fill="#000" style="color:#000">B</text>
<text class="sim" x="453.26 457.88 463.88 483.26 489.26 494.57 501.26" y="717" fill="#000" style="color:#000">topits:</text>
<text class="sim" transform="translate(449.0 717) scale(0.978 1)" x="-3.48" y="0" fill="#000" style="color:#000">S</text>
<text class="sim" transform="translate(479.0 717) scale(0.816 1)" x="-4.17" y="0" fill="#000" style="color:#000">B</text>
<text class="sim" x="630.23 635.88 641.88 648.92 654.23 661.26 666.23 673.26" y="667" fill="#000" style="color:#000">audrate:</text>
<text class="sim" transform="translate(627.0 667) scale(0.816 1)" x="-4.17" y="0" fill="#000" style="color:#000">B</text>
<text class="sim" x="642.23 648.92 655.26 661.26 665.88 673.26" y="691" fill="#000" style="color:#000">arity:</text>
<text class="sim" transform="translate(639.0 691) scale(0.978 1)" x="-3.48" y="0" fill="#000" style="color:#000">P</text>
<text class="sim" x="629.88 636.23 641.88 647.88 655.26 659.88 665.88 673.26" y="717" fill="#000" style="color:#000">ncoding:</text>
<text class="sim" transform="translate(627.0 717) scale(0.891 1)" x="-3.82" y="0" fill="#000" style="color:#000">E</text>
<text class="sim" x="535.88 541.88 549.26 566.92 571.88 579.26 585.26" y="665" fill="#6d6d6d" style="color:#6d6d6d">21:roli</text>
<text class="sim" transform="translate(521.0 665) scale(0.816 1)" x="-4.17" y="0" fill="#6d6d6d" style="color:#6d6d6d">C</text>
<text class="sim" transform="translate(527.0 665) scale(0.753 1)" x="-4.51" y="0" fill="#6d6d6d" style="color:#6d6d6d">O</text>
<text class="sim" transform="translate(533.0 665) scale(0.612 1)" x="-5.56" y="0" fill="#6d6d6d" style="color:#6d6d6d">M</text>
<text class="sim" transform="translate(563.0 665) scale(0.978 1)" x="-3.48" y="0" fill="#6d6d6d" style="color:#6d6d6d">P</text>
<path d="M596 660 L600.5 664.5 L605 660" fill="none" stroke="#a0a0a0" stroke-width="1"/>
<text class="sans" x="518" y="691" font-size="11" fill="#808080" text-anchor="start" >8</text>
<path d="M596 685 L600.5 689.5 L605 685" fill="none" stroke="#a8a8a8" stroke-width="1"/>
<text class="sans" x="518" y="716" font-size="11" fill="#808080" text-anchor="start" >1</text>
<path d="M596 710 L600.5 714.5 L605 710" fill="none" stroke="#a8a8a8" stroke-width="1"/>
<text class="sans" x="690" y="665" font-size="11" fill="#6d6d6d" text-anchor="start" >1500000</text>
<path d="M758 660 L762.5 664.5 L767 660" fill="none" stroke="#a0a0a0" stroke-width="1"/>
<text class="sim" x="696.88 702.88 709.23" y="690" fill="#808080" style="color:#808080">one</text>
<text class="sim" transform="translate(694.0 690) scale(0.753 1)" x="-4.51" y="0" fill="#808080" style="color:#808080">N</text>
<path d="M758 685 L762.5 689.5 L767 685" fill="none" stroke="#a8a8a8" stroke-width="1"/>
<text class="sim" x="707.88" y="715" fill="#000" style="color:#000">8</text>
<text class="sim" transform="translate(693.0 715) scale(0.753 1)" x="-4.51" y="0" fill="#000" style="color:#000">U</text>
<text class="sim" transform="translate(699.0 715) scale(0.891 1)" x="-3.82" y="0" fill="#000" style="color:#000">T</text>
<text class="sim" transform="translate(705.0 715) scale(0.978 1)" x="-3.48" y="0" fill="#000" style="color:#000">F</text>
<path d="M758 710 L762.5 714.5 L767 710" fill="none" stroke="#333" stroke-width="1"/>
<text class="sans" x="433" y="766" font-size="11" fill="#000" text-anchor="start" font-weight="bold" letter-spacing="-0.68" word-spacing="1.5">COM21 is open</text>
<text class="sim" x="559.76 564.38 571.07 576.73" y="766" fill="#000" style="color:#000">lose</text>
<text class="sim" transform="translate(555.5 766) scale(0.816 1)" x="-4.17" y="0" fill="#000" style="color:#000">C</text>
<path d="M622.3 761.3 L625.5 764.6 L630.9 758.2" fill="none" stroke="#4a4a4a" stroke-width="1.5"/>
<text class="sim" x="645.26 649.88 656.57 662.23 675.26 679.88 691.88 697.88 709.88 717.26 721.88 728.23 733.88 751.88 757.88 764.23" y="765" fill="#000" style="color:#000">loseindonloadode</text>
<text class="sim" transform="translate(641.0 765) scale(0.816 1)" x="-4.17" y="0" fill="#000" style="color:#000">C</text>
<text class="sim" transform="translate(707.0 765) scale(0.753 1)" x="-4.51" y="0" fill="#000" style="color:#000">w</text>
<text class="sim" transform="translate(749.0 765) scale(0.699 1)" x="-4.86" y="0" fill="#000" style="color:#000">m</text>
<text class="sim" transform="translate(792.0 68) scale(0.753 1)" x="-4.51" y="0" fill="#000" style="color:#000">D</text>
<text class="sim" transform="translate(798.0 68) scale(0.816 1)" x="-4.17" y="0" fill="#000" style="color:#000">B</text>
<text class="sim" transform="translate(804.0 68) scale(0.753 1)" x="-4.51" y="0" fill="#000" style="color:#000">G</text>
<text class="sim" transform="translate(840.0 70) scale(0.753 1)" x="-4.51" y="0" fill="#000" style="color:#000">A</text>
<text class="sim" transform="translate(846.0 70) scale(0.753 1)" x="-4.51" y="0" fill="#000" style="color:#000">U</text>
<text class="sim" transform="translate(852.0 70) scale(0.891 1)" x="-3.82" y="0" fill="#000" style="color:#000">T</text>
<text class="sim" transform="translate(858.0 70) scale(0.753 1)" x="-4.51" y="0" fill="#000" style="color:#000">O</text>
<text class="sim" x="805.23 810.88 818.26 823.57 830.26 835.23 841.92 859.92 864.88 871.23 877.23 883.57 889.57" y="91" fill="#000" style="color:#000">egisterrocess</text>
<text class="sim" transform="translate(802.0 91) scale(0.816 1)" x="-4.17" y="0" fill="#000" style="color:#000">R</text>
<text class="sim" transform="translate(856.0 91) scale(0.978 1)" x="-3.48" y="0" fill="#000" style="color:#000">P</text>
<text class="sim" x="854.88 860.88 867.23 874.26" y="113" fill="#000" style="color:#000">ype:</text>
<text class="sim" transform="translate(852.0 113) scale(0.891 1)" x="-3.82" y="0" fill="#000" style="color:#000">T</text>
<text class="sim" x="855.23 862.26 866.88 874.26" y="135" fill="#a0a0a0" style="color:#a0a0a0">ath:</text>
<text class="sim" transform="translate(834.0 135) scale(0.816 1)" x="-4.17" y="0" fill="#a0a0a0" style="color:#a0a0a0">R</text>
<text class="sim" transform="translate(840.0 135) scale(0.978 1)" x="-3.48" y="0" fill="#a0a0a0" style="color:#a0a0a0">F</text>
<text class="sim" transform="translate(852.0 135) scale(0.978 1)" x="-3.48" y="0" fill="#a0a0a0" style="color:#a0a0a0">P</text>
<text class="sim" x="843.92 849.92 855.57 861.23 868.26 874.26" y="156" fill="#000" style="color:#000">ffset:</text>
<text class="sim" transform="translate(840.0 156) scale(0.753 1)" x="-4.51" y="0" fill="#000" style="color:#000">O</text>
<text class="sim" x="849.23 856.26 860.88 867.23 874.26" y="178" fill="#000" style="color:#000">alue:</text>
<text class="sim" transform="translate(846.0 178) scale(0.753 1)" x="-4.51" y="0" fill="#000" style="color:#000">V</text>
<text class="sim" x="888.88 894.88" y="135" fill="#000" style="color:#000">0x</text>
<text class="sim" x="888.88 894.88" y="156" fill="#000" style="color:#000">0x</text>
<text class="sim" x="888.88 894.88" y="178" fill="#000" style="color:#000">0x</text>
<text class="sim" x="918.88 925.57 932.26 937.23" y="112" fill="#000" style="color:#000">yste</text>
<text class="sim" transform="translate(916.0 112) scale(0.978 1)" x="-3.48" y="0" fill="#000" style="color:#000">S</text>
<text class="sim" transform="translate(946.0 112) scale(0.699 1)" x="-4.86" y="0" fill="#000" style="color:#000">m</text>
<path d="M971 106 L975.5 110.5 L980 106" fill="none" stroke="#333" stroke-width="1"/>
<text class="sans" x="912" y="132.5" font-size="11" fill="#8a8a8a" text-anchor="start" >00000000</text>
<text class="sans" x="912" y="154" font-size="11" fill="#000" text-anchor="start" >00000000</text>
<text class="sim" x="870.73 876.73 882.38" y="205" fill="#000" style="color:#000">ead</text>
<text class="sim" transform="translate(867.5 205) scale(0.816 1)" x="-4.17" y="0" fill="#000" style="color:#000">R</text>
<text class="sim" x="945.42 951.76 957.76 962.73" y="205" fill="#000" style="color:#000">rite</text>
<text class="sim" transform="translate(941.5 205) scale(0.576 1)" x="-5.9" y="0" fill="#000" style="color:#000">W</text>
<text class="sim" x="1024.38 1036.38" y="205" fill="#000" style="color:#000">up</text>
<text class="sim" transform="translate(1021.5 205) scale(0.753 1)" x="-4.51" y="0" fill="#000" style="color:#000">D</text>
<text class="sim" transform="translate(1033.5 205) scale(0.699 1)" x="-4.86" y="0" fill="#000" style="color:#000">m</text>
<text class="sim" x="806.26 812.26 829.23 836.26 840.88 847.23" y="238" fill="#000" style="color:#000">italue</text>
<text class="sim" transform="translate(802.0 238) scale(0.816 1)" x="-4.17" y="0" fill="#000" style="color:#000">B</text>
<text class="sim" transform="translate(826.0 238) scale(0.753 1)" x="-4.51" y="0" fill="#000" style="color:#000">V</text>
<text class="sim" x="856.38 862.38" y="255" fill="#000" style="color:#000">31</text>
<text class="sim" x="881.38 887.38" y="255" fill="#000" style="color:#000">30</text>
<text class="sim" x="906.38 912.38" y="255" fill="#000" style="color:#000">29</text>
<text class="sim" x="931.38 937.38" y="255" fill="#000" style="color:#000">28</text>
<text class="sim" x="956.38 962.38" y="255" fill="#000" style="color:#000">27</text>
<text class="sim" x="981.38 987.38" y="255" fill="#000" style="color:#000">26</text>
<text class="sim" x="1006.38 1012.38" y="255" fill="#000" style="color:#000">25</text>
<text class="sim" x="1031.38 1037.38" y="255" fill="#000" style="color:#000">24</text>
<text class="sim" x="856.38 862.38" y="291" fill="#000" style="color:#000">23</text>
<text class="sim" x="881.38 887.38" y="291" fill="#000" style="color:#000">22</text>
<text class="sim" x="906.38 912.38" y="291" fill="#000" style="color:#000">21</text>
<text class="sim" x="931.38 937.38" y="291" fill="#000" style="color:#000">20</text>
<text class="sim" x="956.38 962.38" y="291" fill="#000" style="color:#000">19</text>
<text class="sim" x="981.38 987.38" y="291" fill="#000" style="color:#000">18</text>
<text class="sim" x="1006.38 1012.38" y="291" fill="#000" style="color:#000">17</text>
<text class="sim" x="1031.38 1037.38" y="291" fill="#000" style="color:#000">16</text>
<text class="sim" x="856.38 862.38" y="327" fill="#000" style="color:#000">15</text>
<text class="sim" x="881.38 887.38" y="328" fill="#000" style="color:#000">14</text>
<text class="sim" x="906.38 912.38" y="328" fill="#000" style="color:#000">13</text>
<text class="sim" x="931.38 937.38" y="328" fill="#000" style="color:#000">12</text>
<text class="sim" x="956.38 962.38" y="328" fill="#000" style="color:#000">11</text>
<text class="sim" x="981.38 987.38" y="328" fill="#000" style="color:#000">10</text>
<text class="sim" x="1009.38" y="328" fill="#000" style="color:#000">9</text>
<text class="sim" x="1034.38" y="328" fill="#000" style="color:#000">8</text>
<text class="sim" x="859.38" y="363" fill="#000" style="color:#000">7</text>
<text class="sim" x="884.38" y="363" fill="#000" style="color:#000">6</text>
<text class="sim" x="909.38" y="363" fill="#000" style="color:#000">5</text>
<text class="sim" x="934.38" y="363" fill="#000" style="color:#000">4</text>
<text class="sim" x="959.38" y="363" fill="#000" style="color:#000">3</text>
<text class="sim" x="984.38" y="363" fill="#000" style="color:#000">2</text>
<text class="sim" x="1009.38" y="363" fill="#000" style="color:#000">1</text>
<text class="sim" x="1034.38" y="363" fill="#000" style="color:#000">0</text>
<text class="sim" x="805.23 810.88 816.88 823.23" y="408" fill="#000" style="color:#000">cope</text>
<text class="sim" transform="translate(802.0 408) scale(0.978 1)" x="-3.48" y="0" fill="#000" style="color:#000">S</text>
<text class="sim" x="827.26" y="436" fill="#000" style="color:#000">:</text>
<text class="sim" transform="translate(823.0 436) scale(0.753 1)" x="-4.51" y="0" fill="#000" style="color:#000">X</text>
<text class="sim" x="843.26 847.88 853.88" y="436" fill="#000" style="color:#000">joy</text>
<text class="sim" x="920.23 926.92 932.23 937.88 945.26 951.26 957.26 963.26 969.26 980.23 992.23 998.57" y="436" fill="#000" style="color:#000">efault:tieas</text>
<text class="sim" transform="translate(917.0 436) scale(0.753 1)" x="-4.51" y="0" fill="#000" style="color:#000">D</text>
<text class="sim" transform="translate(977.0 436) scale(0.699 1)" x="-4.86" y="0" fill="#000" style="color:#000">m</text>
<text class="sim" transform="translate(1013.0 436) scale(0.753 1)" x="-4.51" y="0" fill="#000" style="color:#000">X</text>
<path d="M796.3 455.3 L799.5 458.6 L804.9 452.2" fill="none" stroke="#4a4a4a" stroke-width="1.5"/>
<text class="sim" x="818.88 826.26" y="460" fill="#000" style="color:#000">1:</text>
<text class="sim" transform="translate(816.0 460) scale(0.753 1)" x="-4.51" y="0" fill="#000" style="color:#000">Y</text>
<text class="sim" x="841.88 848.23 855.26 859.88 866.23 871.88" y="459" fill="#000" style="color:#000">value1</text>
<path d="M914.3 455.3 L917.5 458.6 L922.9 452.2" fill="none" stroke="#4a4a4a" stroke-width="1.5"/>
<text class="sim" x="936.88 944.26" y="460" fill="#000" style="color:#000">2:</text>
<text class="sim" transform="translate(934.0 460) scale(0.753 1)" x="-4.51" y="0" fill="#000" style="color:#000">Y</text>
<text class="sim" x="959.88 966.23 973.26 977.88 984.23 989.88" y="459" fill="#000" style="color:#000">value2</text>
<path d="M796.3 479.3 L799.5 482.6 L804.9 476.2" fill="none" stroke="#4a4a4a" stroke-width="1.5"/>
<text class="sim" x="818.88 826.26" y="484" fill="#000" style="color:#000">3:</text>
<text class="sim" transform="translate(816.0 484) scale(0.753 1)" x="-4.51" y="0" fill="#000" style="color:#000">Y</text>
<text class="sim" x="841.88 848.23 855.26 859.88 866.23 871.88" y="483" fill="#000" style="color:#000">value3</text>
<text class="sim" x="936.88 944.26" y="484" fill="#a0a0a0" style="color:#a0a0a0">4:</text>
<text class="sim" transform="translate(934.0 484) scale(0.753 1)" x="-4.51" y="0" fill="#a0a0a0" style="color:#a0a0a0">Y</text>
<text class="sim" x="818.88 826.26" y="508" fill="#a0a0a0" style="color:#a0a0a0">5:</text>
<text class="sim" transform="translate(816.0 508) scale(0.753 1)" x="-4.51" y="0" fill="#a0a0a0" style="color:#a0a0a0">Y</text>
<text class="sim" x="936.88 944.26" y="508" fill="#a0a0a0" style="color:#a0a0a0">6:</text>
<text class="sim" transform="translate(934.0 508) scale(0.753 1)" x="-4.51" y="0" fill="#a0a0a0" style="color:#a0a0a0">Y</text>
<text class="sim" x="812.23 823.88 831.26 836.23 842.57 849.26" y="536" fill="#000" style="color:#000">aples:</text>
<text class="sim" transform="translate(797.0 536) scale(0.753 1)" x="-4.51" y="0" fill="#000" style="color:#000">X</text>
<text class="sim" transform="translate(809.0 536) scale(0.978 1)" x="-3.48" y="0" fill="#000" style="color:#000">S</text>
<text class="sim" transform="translate(821.0 536) scale(0.699 1)" x="-4.86" y="0" fill="#000" style="color:#000">m</text>
<text class="sans" x="864" y="534" font-size="11" fill="#000" text-anchor="start" >50</text>
<path d="M913 529.5 L916 526 L919 529.5 Z M913 534 L916 537.5 L919 534 Z" fill="#111"/>
<text class="sim" x="858.76 863.73 870.42 876.76" y="562" fill="#000" style="color:#000">tart</text>
<text class="sim" transform="translate(854.5 562) scale(0.978 1)" x="-3.48" y="0" fill="#000" style="color:#000">S</text>
<text class="sim" x="918.76 923.73 930.42 936.76 953.38 959.38 965.38 972.76 977.38 983.38" y="562" fill="#000" style="color:#000">tartogging</text>
<text class="sim" transform="translate(914.5 562) scale(0.978 1)" x="-3.48" y="0" fill="#000" style="color:#000">S</text>
<text class="sim" transform="translate(950.5 562) scale(0.891 1)" x="-3.82" y="0" fill="#000" style="color:#000">L</text>
<text class="sim" x="1016.73 1023.07 1028.73 1035.76 1052.38 1058.38" y="562" fill="#000" style="color:#000">esetvg</text>
<text class="sim" transform="translate(1013.5 562) scale(0.816 1)" x="-4.17" y="0" fill="#000" style="color:#000">R</text>
<text class="sim" transform="translate(1049.5 562) scale(0.753 1)" x="-4.51" y="0" fill="#000" style="color:#000">A</text>
<text class="sim" x="806.26 818.26 835.23 840.88 846.88 852.88" y="593" fill="#000" style="color:#000">iiebug</text>
<text class="sim" transform="translate(802.0 593) scale(0.576 1)" x="-5.9" y="0" fill="#000" style="color:#000">W</text>
<text class="sim" transform="translate(814.0 593) scale(0.978 1)" x="-3.48" y="0" fill="#000" style="color:#000">F</text>
<text class="sim" transform="translate(832.0 593) scale(0.753 1)" x="-4.51" y="0" fill="#000" style="color:#000">D</text>
<text class="sim" x="793.88 799.88" y="622" fill="#000" style="color:#000">0x</text>
<text class="sim" x="859.42 870.38 901.42" y="622" fill="#000" style="color:#000">I_I</text>
<text class="sim" transform="translate(855.5 622) scale(0.753 1)" x="-4.51" y="0" fill="#000" style="color:#000">D</text>
<text class="sim" transform="translate(867.5 622) scale(0.753 1)" x="-4.51" y="0" fill="#000" style="color:#000">G</text>
<text class="sim" transform="translate(879.5 622) scale(0.612 1)" x="-5.56" y="0" fill="#000" style="color:#000">M</text>
<text class="sim" transform="translate(885.5 622) scale(0.753 1)" x="-4.51" y="0" fill="#000" style="color:#000">A</text>
<text class="sim" transform="translate(891.5 622) scale(0.816 1)" x="-4.17" y="0" fill="#000" style="color:#000">R</text>
<text class="sim" transform="translate(897.5 622) scale(0.753 1)" x="-4.51" y="0" fill="#000" style="color:#000">G</text>
<text class="sim" transform="translate(909.5 622) scale(0.753 1)" x="-4.51" y="0" fill="#000" style="color:#000">N</text>
<text class="sim" x="938.88" y="622" fill="#000" style="color:#000">0</text>
<path d="M962 618 L966.5 622.5 L971 618" fill="none" stroke="#333" stroke-width="1"/>
<text class="sim" transform="translate(986.5 622) scale(0.891 1)" x="-3.82" y="0" fill="#000" style="color:#000">E</text>
<text class="sim" transform="translate(992.5 622) scale(0.753 1)" x="-4.51" y="0" fill="#000" style="color:#000">D</text>
<text class="sim" transform="translate(998.5 622) scale(0.816 1)" x="-4.17" y="0" fill="#000" style="color:#000">C</text>
<text class="sim" transform="translate(1004.5 622) scale(0.816 1)" x="-4.17" y="0" fill="#000" style="color:#000">C</text>
<text class="sim" transform="translate(1010.5 622) scale(0.753 1)" x="-4.51" y="0" fill="#000" style="color:#000">A</text>
<text class="sim" x="793.88 799.88" y="655" fill="#000" style="color:#000">0x</text>
<text class="sim" transform="translate(857.0 655) scale(0.753 1)" x="-4.51" y="0" fill="#000" style="color:#000">D</text>
<text class="sim" transform="translate(863.0 655) scale(0.816 1)" x="-4.17" y="0" fill="#000" style="color:#000">B</text>
<text class="sim" transform="translate(869.0 655) scale(0.753 1)" x="-4.51" y="0" fill="#000" style="color:#000">G</text>
<text class="sim" transform="translate(890.0 655) scale(0.978 1)" x="-3.48" y="0" fill="#000" style="color:#000">F</text>
<text class="sim" transform="translate(896.0 655) scale(0.753 1)" x="-4.51" y="0" fill="#000" style="color:#000">A</text>
<text class="sans" x="1001.5" y="652.5" font-size="11" fill="#000" text-anchor="start" >5</text>
<text class="sim" x="1022.57" y="654" fill="#000" style="color:#000">s</text>
<text class="sim" x="799.88 812.23 818.92 836.23 841.88 848.23 855.26" y="682" fill="#000" style="color:#000">oerave:</text>
<text class="sim" transform="translate(797.0 682) scale(0.978 1)" x="-3.48" y="0" fill="#000" style="color:#000">P</text>
<text class="sim" transform="translate(809.0 682) scale(0.753 1)" x="-4.51" y="0" fill="#000" style="color:#000">w</text>
<text class="sim" transform="translate(833.0 682) scale(0.978 1)" x="-3.48" y="0" fill="#000" style="color:#000">S</text>
<text class="sim" x="897.26 902.57 908.23 913.88 921.26 926.23" y="682" fill="#000" style="color:#000">isable</text>
<text class="sim" transform="translate(893.0 682) scale(0.753 1)" x="-4.51" y="0" fill="#000" style="color:#000">D</text>
<text class="sim" x="976.88 983.23 988.88 996.26 1001.23" y="682" fill="#000" style="color:#000">nable</text>
<text class="sim" transform="translate(974.0 682) scale(0.891 1)" x="-3.82" y="0" fill="#000" style="color:#000">E</text>
<text class="sans" x="3.6" y="801" font-size="12" fill="#000" text-anchor="start" letter-spacing="-0.1">Line Number : 1100/1100</text>
<text class="sans" x="864" y="801" font-size="12" fill="#000" text-anchor="start" letter-spacing="-0.5">Serial: COM21,1500000</text>
</svg>
</body></html>
